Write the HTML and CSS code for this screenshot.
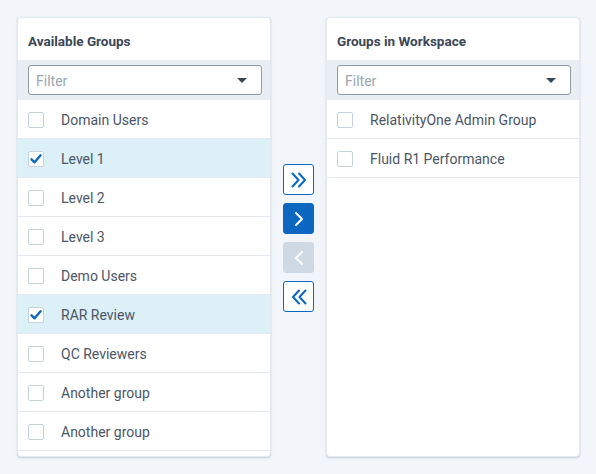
FILE: index.html
```html
<!DOCTYPE html>
<html>
<head>
<meta charset="utf-8">
<link rel="stylesheet" href="styles.css">
</head>
<body>
<div class="picker">
  <section class="panel">
    <h2 class="panel-title">Available Groups</h2>
    <div class="filter-band">
      <div class="filter">
        <span class="filter-ph">Filter</span>
        <span class="caret"></span>
      </div>
    </div>
    <ul class="list">
      <li class="row"><span class="cb"></span><span class="label">Domain Users</span></li>
      <li class="row selected"><span class="cb checked"><svg viewBox="0 0 16 16" width="16" height="16"><path d="M3.5 8.3 L6.6 11.3 L12.6 4.3" fill="none" stroke="#0b67c0" stroke-width="2.4" stroke-linecap="round" stroke-linejoin="round"/></svg></span><span class="label">Level 1</span></li>
      <li class="row"><span class="cb"></span><span class="label">Level 2</span></li>
      <li class="row"><span class="cb"></span><span class="label">Level 3</span></li>
      <li class="row"><span class="cb"></span><span class="label">Demo Users</span></li>
      <li class="row selected"><span class="cb checked"><svg viewBox="0 0 16 16" width="16" height="16"><path d="M3.5 8.3 L6.6 11.3 L12.6 4.3" fill="none" stroke="#0b67c0" stroke-width="2.4" stroke-linecap="round" stroke-linejoin="round"/></svg></span><span class="label">RAR Review</span></li>
      <li class="row"><span class="cb"></span><span class="label">QC Reviewers</span></li>
      <li class="row"><span class="cb"></span><span class="label">Another group</span></li>
      <li class="row"><span class="cb"></span><span class="label">Another group</span></li>
    </ul>
  </section>

  <div class="actions">
    <button class="btn outline" aria-label="Move all right"><svg viewBox="0 0 18 18" width="18" height="18"><path d="M2.5 2.5 L8.5 9 L2.5 15.5 M9 2.5 L15 9 L9 15.5" fill="none" stroke="#0b67c0" stroke-width="2" stroke-linecap="round" stroke-linejoin="round"/></svg></button>
    <button class="btn primary" aria-label="Move right"><svg viewBox="0 0 18 18" width="18" height="18"><path d="M6 3 L12 9 L6 15" fill="none" stroke="#ffffff" stroke-width="2" stroke-linecap="round" stroke-linejoin="round"/></svg></button>
    <button class="btn disabled" aria-label="Move left"><svg viewBox="0 0 18 18" width="18" height="18"><path d="M12 3 L6 9 L12 15" fill="none" stroke="#ffffff" stroke-width="2" stroke-linecap="round" stroke-linejoin="round"/></svg></button>
    <button class="btn outline" aria-label="Move all left"><svg viewBox="0 0 18 18" width="18" height="18"><path d="M15.5 2.5 L9.5 9 L15.5 15.5 M9 2.5 L3 9 L9 15.5" fill="none" stroke="#0b67c0" stroke-width="2" stroke-linecap="round" stroke-linejoin="round"/></svg></button>
  </div>

  <section class="panel">
    <h2 class="panel-title">Groups in Workspace</h2>
    <div class="filter-band">
      <div class="filter">
        <span class="filter-ph">Filter</span>
        <span class="caret"></span>
      </div>
    </div>
    <ul class="list">
      <li class="row"><span class="cb"></span><span class="label">RelativityOne Admin Group</span></li>
      <li class="row"><span class="cb"></span><span class="label">Fluid R1 Performance</span></li>
    </ul>
  </section>
</div>
</body>
</html>
```

FILE: styles.css
```css
* { box-sizing: border-box; }

html, body {
  margin: 0;
  padding: 0;
}

body {
  background: #f2f6fa;
  font-family: Roboto, "Liberation Sans", Arial, sans-serif;
  width: 596px;
  height: 474px;
  overflow: hidden;
}

.picker {
  display: flex;
  align-items: stretch;
  gap: 12px;
  padding: 17px 0 0 17px;
}

.panel {
  width: 254px;
  height: 440px;
  background: #ffffff;
  border-radius: 4px;
  border: 1px solid #e4e9ef;
  box-shadow: 0 1px 2px rgba(60, 80, 110, 0.25);
  overflow: hidden;
  display: flex;
  flex-direction: column;
}

.panel-title {
  margin: 0;
  height: 42px;
  padding: 15px 0 0 10px;
  font-size: 13.5px;
  line-height: 16px;
  font-weight: 700;
  color: #3b4656;
}

.filter-band {
  background: #e9eef4;
  padding: 5px 8px 5px 10px;
  height: 40px;
}

.filter {
  height: 30px;
  border: 1px solid #8d99a6;
  border-radius: 3px;
  background: #ffffff;
  display: flex;
  align-items: center;
  justify-content: space-between;
  padding: 1px 14px 0 7px;
}

.filter-ph {
  font-size: 14px;
  color: #9ba6b2;
}

.caret {
  width: 0;
  height: 0;
  border-left: 5px solid transparent;
  border-right: 5px solid transparent;
  border-top: 5px solid #3b4656;
}

.list {
  list-style: none;
  margin: 0;
  padding: 0;
}

.row {
  height: 39px;
  border-bottom: 1px solid #e4e9ef;
  display: flex;
  align-items: center;
  padding: 1px 0 0 10px;
}

.row.selected {
  background: #dcf0f7;
}

.cb {
  width: 16px;
  height: 16px;
  border: 1.5px solid #c6d1dd;
  border-radius: 2px;
  background: #ffffff;
  flex: none;
  display: flex;
  align-items: center;
  justify-content: center;
}

.cb svg {
  display: block;
  flex: none;
}

.label {
  margin-left: 17px;
  font-size: 14px;
  color: #4b5666;
}

.actions {
  align-self: center;
  display: flex;
  flex-direction: column;
  gap: 8px;
  width: 31px;
  margin-top: 2px;
}

.btn {
  width: 31px;
  height: 31px;
  padding: 0;
  border-radius: 3px;
  display: flex;
  align-items: center;
  justify-content: center;
  cursor: pointer;
}

.btn.outline {
  background: #ffffff;
  border: 1px solid #0b67c0;
}

.btn.primary {
  background: #0b67c0;
  border: 1px solid #0b67c0;
}

.btn.disabled {
  background: #cfd9e4;
  border: 1px solid #cfd9e4;
}
```
